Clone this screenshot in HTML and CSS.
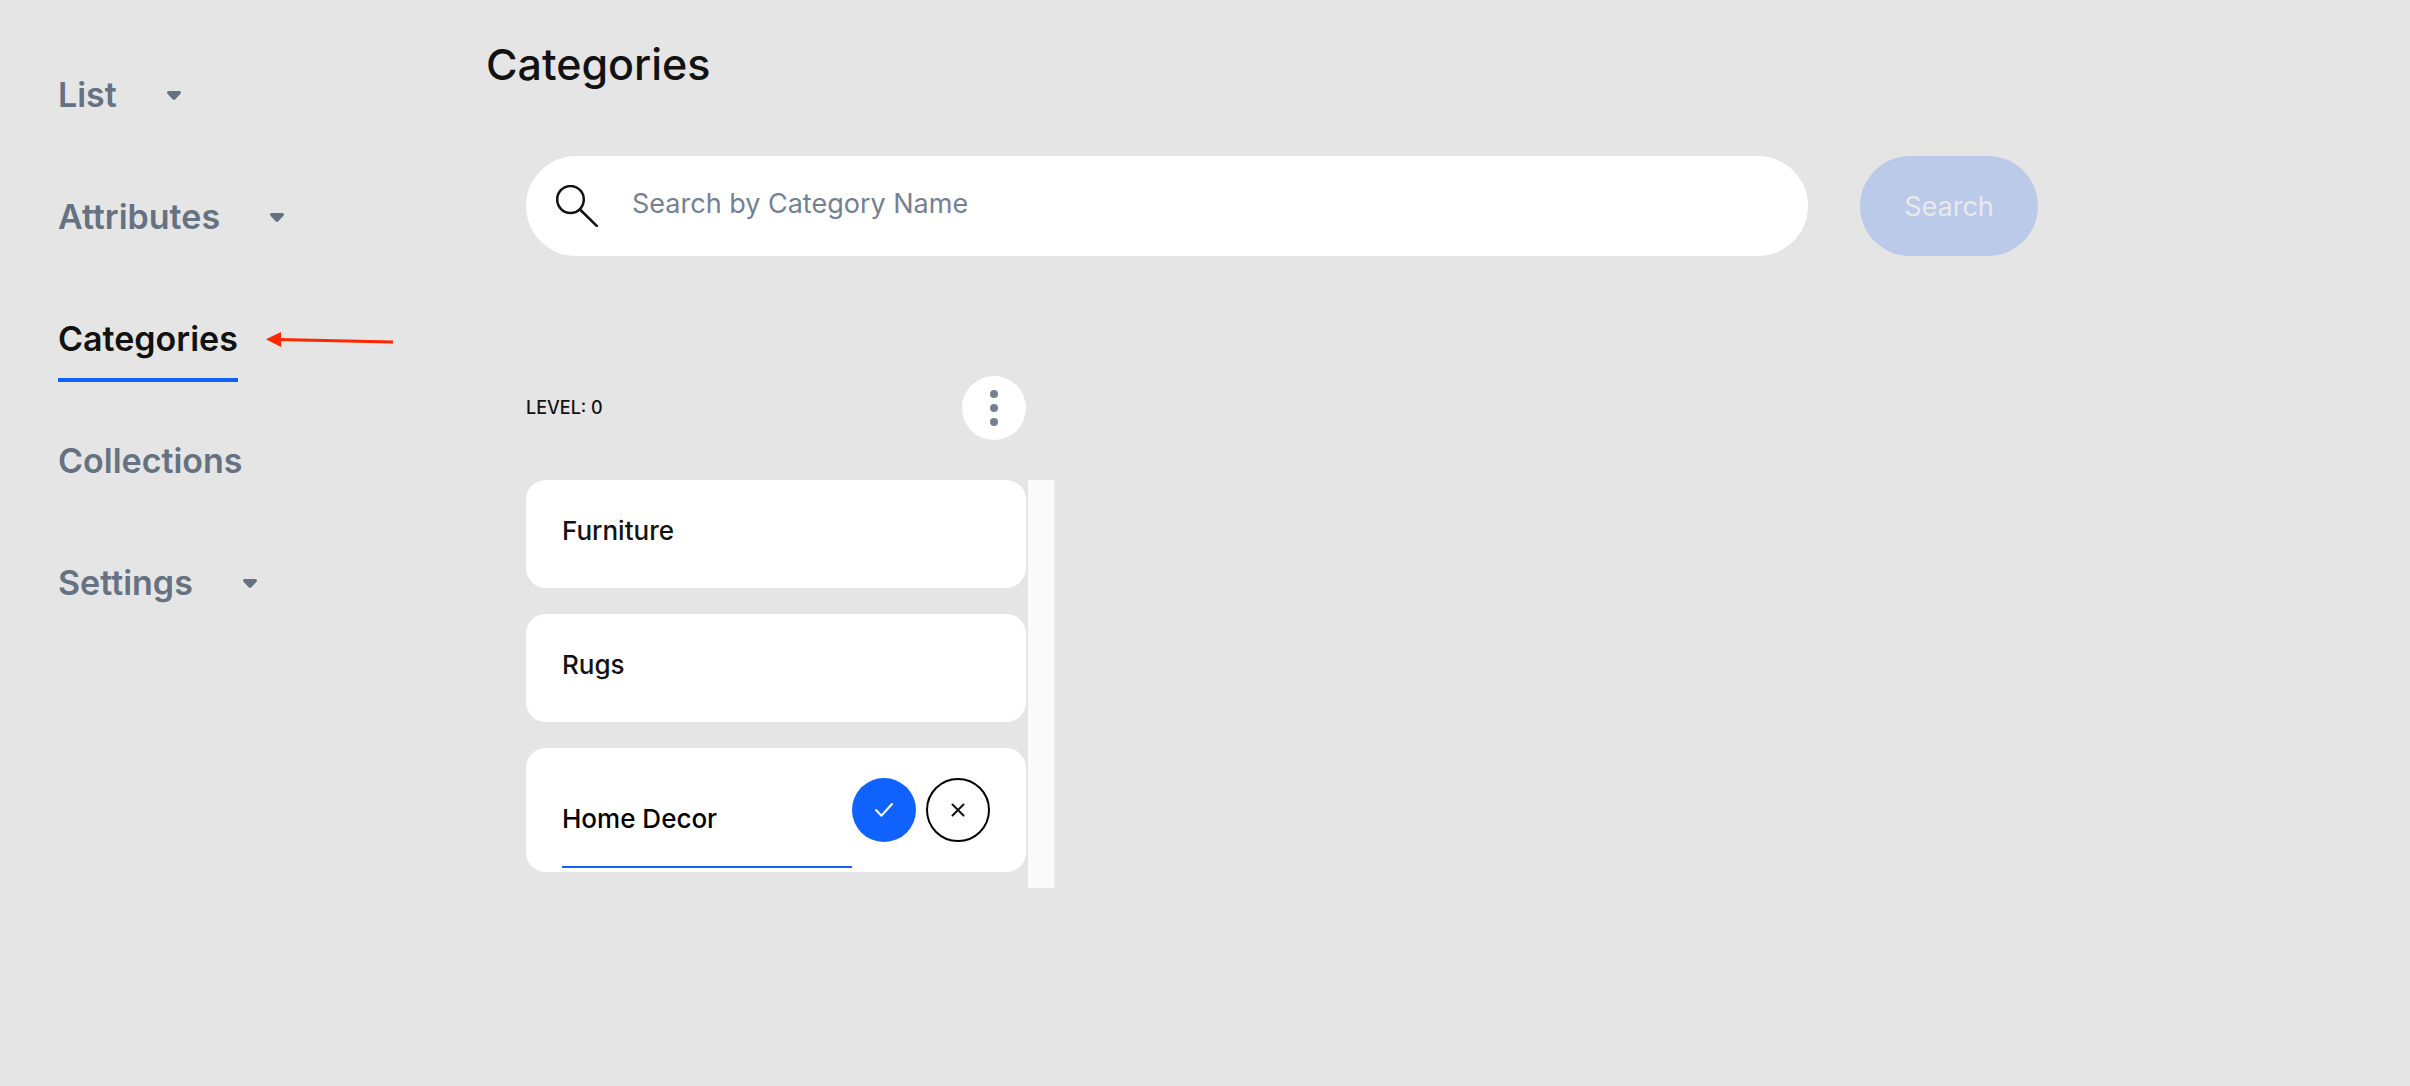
FILE: index.html
```html
<!DOCTYPE html>
<html lang="en">
<head>
<meta charset="utf-8">
<meta name="viewport" content="width=device-width, initial-scale=1">
<title>Categories</title>
<link rel="stylesheet" href="styles.css">
</head>
<body>
<div class="layout">
  <nav class="sidebar" aria-label="Catalog">
    <button class="nav-item" type="button"><span>List</span><svg class="caret" viewBox="0 0 14 9" aria-hidden="true"><path d="M1.500 0h11Q14 0 14 1.500Q14 2.400 13.300 3L8.600 8Q7 9.800 5.400 8L.7 3Q0 2.400 0 1.500Q0 0 1.500 0z"/></svg></button>
    <button class="nav-item" type="button"><span>Attributes</span><svg class="caret" viewBox="0 0 14 9" aria-hidden="true"><path d="M1.500 0h11Q14 0 14 1.500Q14 2.400 13.300 3L8.600 8Q7 9.800 5.400 8L.7 3Q0 2.400 0 1.500Q0 0 1.500 0z"/></svg></button>
    <a class="nav-item nav-item-active" href="#categories" aria-current="page"><span>Categories</span><svg class="pointer" viewBox="0 0 128 16" aria-hidden="true"><path class="pointer-line" d="M12 7.400L127 10"/><path class="pointer-head" d="M0 7.300L15 0v15z"/></svg></a>
    <a class="nav-item" href="#collections"><span>Collections</span></a>
    <button class="nav-item" type="button"><span>Settings</span><svg class="caret" viewBox="0 0 14 9" aria-hidden="true"><path d="M1.500 0h11Q14 0 14 1.500Q14 2.400 13.300 3L8.600 8Q7 9.800 5.400 8L.7 3Q0 2.400 0 1.500Q0 0 1.500 0z"/></svg></button>
  </nav>
  <main class="content">
    <h1 class="title">Categories</h1>
    <form class="search">
      <label class="search-box">
        <svg class="search-icon" viewBox="0 0 42 42" aria-hidden="true"><ellipse cx="14.500" cy="14.500" rx="13.300" ry="13.500"/><path d="M24 24.500L41 41.200"/></svg>
        <input class="search-input" type="text" placeholder="Search by Category Name" aria-label="Search by Category Name">
      </label>
      <button class="search-button" type="submit" disabled>Search</button>
    </form>
    <section class="level">
      <header class="level-header">
        <h2 class="level-title">LEVEL: 0</h2>
        <button class="round-button menu-button" type="button" aria-label="Level menu"><svg width="8" height="36" viewBox="0 0 8 36" aria-hidden="true"><circle cx="4" cy="4" r="4"/><circle cx="4" cy="18" r="4"/><circle cx="4" cy="32" r="4"/></svg></button>
      </header>
      <div class="level-body">
        <ul class="cards">
          <li class="card">Furniture</li>
          <li class="card">Rugs</li>
          <li class="card card-editing">
            <input class="name-input" type="text" value="Home Decor" aria-label="Category name">
            <div class="actions">
              <button class="round-button confirm-button" type="button" aria-label="Save"><svg width="18" height="14" viewBox="0 0 18 14" aria-hidden="true"><path d="M1 7l5.500 5.700L17 1"/></svg></button>
              <button class="round-button cancel-button" type="button" aria-label="Cancel"><svg width="14" height="14" viewBox="0 0 14 14" aria-hidden="true"><path d="M1.500 1.500l11 11M12.500 1.500l-11 11"/></svg></button>
            </div>
          </li>
        </ul>
        <div class="scroll-track"></div>
      </div>
    </section>
  </main>
</div>
</body>
</html>
```
FILE: styles.css
```css
* {
  box-sizing: border-box;
}

body {
  margin: 0;
  min-height: 100vh;
  background: #e5e5e5;
  color: #121212;
  font-family: Inter, "Liberation Sans", sans-serif;
}

button,
input {
  font: inherit;
}

.layout {
  display: flex;
}

.sidebar {
  display: flex;
  flex: 0 0 486px;
  flex-direction: column;
  align-items: flex-start;
  gap: 57px;
  padding: 73px 0 57px 58px;
}

.nav-item {
  position: relative;
  display: flex;
  align-items: center;
  gap: 50px;
  padding: 0 0 17px;
  border: 0;
  border-bottom: 4px solid transparent;
  background: none;
  color: #667282;
  font-size: 34px;
  font-weight: 600;
  line-height: 44px;
  text-decoration: none;
}

.nav-item-active {
  border-color: #0f62fe;
  color: #121212;
}

.caret {
  width: 14px;
  height: 9px;
  fill: currentColor;
}

.pointer {
  position: absolute;
  top: 15px;
  left: calc(100% + 28px);
  width: 128px;
  height: 16px;
}

.pointer-line {
  fill: none;
  stroke: #ff2600;
  stroke-width: 3;
}

.pointer-head {
  fill: #ff2600;
}

.content {
  flex: 1;
  min-width: 0;
  padding: 36px 40px 40px 0;
}

.title {
  margin: 0;
  font-size: 43px;
  font-weight: 500;
  line-height: 56px;
}

.search {
  display: flex;
  gap: 52px;
  max-width: 1552px;
  margin-top: 64px;
  padding-left: 40px;
}

.search-box {
  display: flex;
  flex: 1;
  align-items: center;
  gap: 34px;
  height: 100px;
  padding: 0 30px;
  border-radius: 50px;
  background: #fff;
}

.search-icon {
  flex: none;
  width: 42px;
  height: 42px;
  fill: none;
  stroke: #121212;
  stroke-width: 2.5;
  stroke-linecap: round;
}

.search-input {
  flex: 1;
  min-width: 0;
  padding: 0 0 4px;
  border: 0;
  outline: 0;
  background: none;
  font-size: 27px;
  line-height: 36px;
}

.search-input::placeholder {
  color: #748193;
  opacity: 1;
}

.search-button {
  width: 178px;
  height: 100px;
  padding: 0;
  border: 0;
  border-radius: 50px;
  background: #bccaea;
  color: #e9e9e9;
  font-size: 27px;
}

.level {
  max-width: 569px;
  margin-top: 120px;
  padding-left: 40px;
}

.level-header {
  display: flex;
  align-items: center;
  justify-content: space-between;
  padding-right: 29px;
}

.level-title {
  margin: 0;
  font-size: 18px;
  font-weight: 500;
  line-height: 24px;
}

.round-button {
  display: flex;
  flex: none;
  align-items: center;
  justify-content: center;
  width: 64px;
  height: 64px;
  padding: 0;
  border: 0;
  border-radius: 50%;
  fill: none;
  stroke-width: 2;
  stroke-linecap: round;
  stroke-linejoin: round;
}

.menu-button {
  background: #fff;
  fill: #748193;
}

.confirm-button {
  background: #0f62fe;
  stroke: #fff;
}

.cancel-button {
  border: 2px solid #000;
  background: #fff;
  stroke: #121212;
}

.level-body {
  display: flex;
  gap: 2px;
  margin-top: 40px;
}

.cards {
  display: flex;
  flex: 1;
  flex-direction: column;
  gap: 26px;
  min-width: 0;
  margin: 0;
  padding: 0 0 16px;
  list-style: none;
}

.card {
  padding: 31px 36px 37px;
  border-radius: 20px;
  background: #fff;
  font-size: 26px;
  font-weight: 500;
  line-height: 40px;
}

.card-editing {
  display: flex;
  padding: 30px 36px 4px;
}

.name-input {
  flex: 1;
  min-width: 0;
  height: 90px;
  padding: 0 0 8px;
  border: 0;
  border-bottom: 2px solid #0f62fe;
  border-radius: 0;
  outline: 0;
  background: none;
  color: #000;
}

.actions {
  display: flex;
  gap: 10px;
}

.scroll-track {
  width: 27px;
  border-right: 1px solid #ececec;
  background: #fafafa;
}
```
